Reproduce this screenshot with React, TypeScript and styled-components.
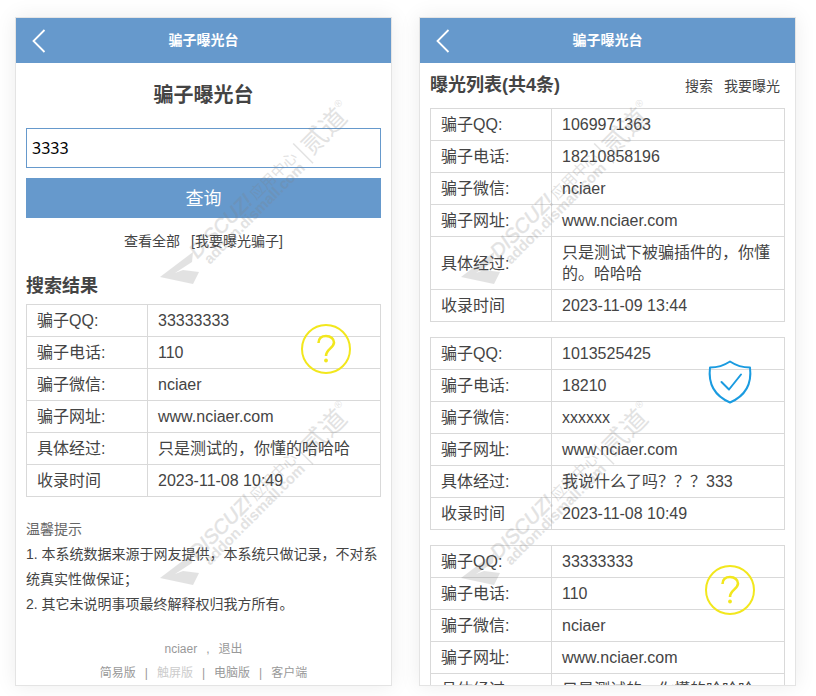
import React from "react";
import styled, { createGlobalStyle, css } from "styled-components";

const GlobalStyle = createGlobalStyle`
  * { box-sizing: border-box; }
  body {
    margin: 0;
    background: #fff;
    color: #444;
    font-family: "Liberation Sans", "Noto Sans CJK SC", sans-serif;
    font-size: 14px;
  }
  a { color: inherit; text-decoration: none; }
`;

const Page = styled.main`
  position: relative;
  display: grid;
  grid-template-columns: 1fr 1fr;
  gap: 27px;
  height: 100vh;
  padding: 17px 20px 10px 15px;
  overflow: hidden;
`;

const Panel = styled.section`
  display: flex;
  flex-direction: column;
  min-width: 0;
  min-height: 0;
  overflow: hidden;
  background: #fff;
  border: 1px solid #e4e4e4;
  box-shadow: 0 0 20px rgba(0, 0, 0, 0.08);
`;

const TopBar = styled.header`
  flex: none;
  display: grid;
  grid-template-columns: 46px 1fr 46px;
  align-items: center;
  height: 45px;
  background: #6699cc;
  color: #fff;
`;

const BackButton = styled.button`
  display: flex;
  justify-content: center;
  padding: 0;
  border: 0;
  background: none;
  color: inherit;
`;

const BarTitle = styled.span`
  text-align: center;
  font-size: 14px;
  font-weight: 700;
  line-height: 24px;
  padding-bottom: 2px;
`;

const Content = styled.div`
  flex: none;
  padding: 0 10px;
`;

const Title = styled.h1`
  margin: 0;
  padding: 16px 0;
  text-align: center;
  font-size: 20px;
  line-height: 33px;
`;

const SearchForm = styled.form`
  display: grid;
  gap: 10px;
`;

const SearchInput = styled.input`
  width: 100%;
  height: 40px;
  padding: 0 5px;
  border: 1px solid #6699cc;
  border-radius: 0;
  outline: 0;
  background: #fff;
  color: #000;
  font: 16px "Noto Sans", sans-serif;
`;

const SubmitButton = styled.button`
  height: 40px;
  padding: 0 0 2px;
  border: 0;
  background: #6699cc;
  color: #fff;
  font-family: inherit;
  font-size: 18px;
`;

const Links = styled.nav<{ $centered?: boolean }>`
  display: flex;
  gap: 11px;
  font-size: 14px;
  line-height: 24px;
  ${(p) => p.$centered && css`
    justify-content: center;
    padding: 11px 0 20px;
  `}
`;

const Heading = styled.h2`
  margin: 0;
  font-size: 18px;
  line-height: 27px;
`;

const ListHeader = styled.div`
  display: flex;
  align-items: center;
  justify-content: space-between;
  padding: 9px 5px 9px 0;
`;

const Results = styled.section`
  display: grid;
  gap: 4px;
`;

const Record = styled.div`
  position: relative;
  & + & { margin-top: 15px; }
`;

const Table = styled.table`
  width: 100%;
  border-collapse: collapse;
  table-layout: fixed;
  font-size: 16px;
  line-height: 21px;
  th, td {
    padding: 5px 10px;
    border: 1px solid #d9d9d9;
    text-align: left;
    vertical-align: middle;
    font-weight: 400;
  }
  th { width: 121px; }
`;

const Mark = styled.svg`
  position: absolute;
  top: 19px;
  right: 29px;
  width: 52px;
  height: 52px;
  fill: none;
`;

const Tips = styled.div`
  padding-top: 20px;
  line-height: 25px;
  p { margin: 0; }
  p:first-child { color: #666; }
`;

const Footer = styled.footer`
  padding-top: 20px;
  color: #999;
  text-align: center;
  font-size: 12px;
  line-height: 24px;
`;

const FooterRow = styled.div`
  display: flex;
  justify-content: center;
  gap: 9px;
`;

const Muted = styled.span`
  color: #ccc;
`;

const Stamps = styled.div`
  position: absolute;
  inset: 97px 0 0 160px;
  display: grid;
  grid-template-columns: 301px 301px;
  grid-auto-rows: 301px;
  overflow: hidden;
  pointer-events: none;
`;

const Stamp = styled.svg`
  width: 200px;
  height: 200px;
  fill: #808080;
  opacity: 0.22;
`;

type Verdict = "unknown" | "safe";

const ROWS = ["骗子QQ:", "骗子电话:", "骗子微信:", "骗子网址:", "具体经过:", "收录时间"];

function VerdictMark({ verdict }: { verdict: Verdict }) {
  if (verdict === "safe") {
    return (
      <Mark viewBox="0 0 52 52" stroke="#1a9be0" strokeWidth="2" strokeLinecap="round" strokeLinejoin="round">
        <path d="M26 5.500C31 8.800 37 11.500 46 11.500C48 28 41 40 26 46.500C11 40 4 28 6 11.500C15 11.500 21 8.800 26 5.500Z" />
        <path d="M17.500 26L25 33.500L37 18.500" />
      </Mark>
    );
  }
  return (
    <Mark viewBox="0 0 52 52" stroke="#f2e71d" strokeWidth="2">
      <circle cx="26" cy="26" r="24" />
      <path d="M18.500 20C18.500 15.500 21.500 13 26 13C31 13 34 16 34 19.500C34 25 26 26 26 33" strokeWidth="2.600" />
      <circle cx="26" cy="37.500" r="1.900" fill="#f2e71d" stroke="none" />
    </Mark>
  );
}

function RecordTable({ values, verdict }: { values: string[]; verdict?: Verdict }) {
  return (
    <Record>
      <Table>
        <tbody>
          {ROWS.map((label, i) => (
            <tr key={label}>
              <th scope="row">{label}</th>
              <td>{values[i]}</td>
            </tr>
          ))}
        </tbody>
      </Table>
      {verdict && <VerdictMark verdict={verdict} />}
    </Record>
  );
}

function Bar() {
  return (
    <TopBar>
      <BackButton type="button" aria-label="返回">
        <svg width="14" height="24" viewBox="0 0 14 24" fill="none" stroke="#fff" strokeWidth="1.800">
          <path d="M12.500 1L1.500 12L12.500 23" />
        </svg>
      </BackButton>
      <BarTitle>骗子曝光台</BarTitle>
    </TopBar>
  );
}

function Watermark() {
  return (
    <Stamp viewBox="0 0 200 200" aria-hidden="true">
      <path d="M0 180L33 155L32 165L15 176L23 173L39 175L33 187Z" />
      <g transform="translate(45 170) rotate(-45)">
        <text x="0" y="-11" fontSize="20" fontStyle="italic" stroke="#808080" strokeWidth="0.500">DISCUZ!</text>
        <text x="83" y="-11" fontSize="15">应用中心</text>
        <text x="5" y="2" fontSize="15" fontWeight="700">addon.dismall.com</text>
        <rect x="149" y="-25" width="1.500" height="28" />
        <text x="154" y="-3" fontSize="26">贰道</text>
        <text x="206" y="-18" fontSize="10">®</text>
      </g>
    </Stamp>
  );
}

export default function App() {
  return (
    <>
      <GlobalStyle />
      <Page>
        <Panel>
          <Bar />
          <Content>
            <Title>骗子曝光台</Title>
            <SearchForm onSubmit={(e) => e.preventDefault()}>
              <SearchInput aria-label="查询内容" defaultValue="3333" />
              <SubmitButton type="submit">查询</SubmitButton>
            </SearchForm>
            <Links $centered>
              <a href="#all">查看全部</a>
              <a href="#report">[我要曝光骗子]</a>
            </Links>
            <Results>
              <Heading>搜索结果</Heading>
              <RecordTable
                verdict="unknown"
                values={["33333333", "110", "nciaer", "www.nciaer.com", "只是测试的，你懂的哈哈哈", "2023-11-08 10:49"]}
              />
            </Results>
            <Tips>
              <p>温馨提示</p>
              <p>1. 本系统数据来源于网友提供，本系统只做记录，不对系统真实性做保证；</p>
              <p>2. 其它未说明事项最终解释权归我方所有。</p>
            </Tips>
            <Footer>
              <FooterRow>
                <a href="#user">nciaer</a>
                <span>,</span>
                <a href="#logout">退出</a>
              </FooterRow>
              <FooterRow>
                <a href="#simple">简易版</a>
                <span>|</span>
                <Muted>触屏版</Muted>
                <span>|</span>
                <a href="#desktop">电脑版</a>
                <span>|</span>
                <a href="#client">客户端</a>
              </FooterRow>
            </Footer>
          </Content>
        </Panel>
        <Panel>
          <Bar />
          <Content>
            <ListHeader>
              <Heading>曝光列表(共4条)</Heading>
              <Links>
                <a href="#search">搜索</a>
                <a href="#report">我要曝光</a>
              </Links>
            </ListHeader>
            <RecordTable
              values={["1069971363", "18210858196", "nciaer", "www.nciaer.com", "只是测试下被骗插件的，你懂的。哈哈哈", "2023-11-09 13:44"]}
            />
            <RecordTable
              verdict="safe"
              values={["1013525425", "18210", "xxxxxx", "www.nciaer.com", "我说什么了吗？？？333", "2023-11-08 10:49"]}
            />
            <RecordTable
              verdict="unknown"
              values={["33333333", "110", "nciaer", "www.nciaer.com", "只是测试的，你懂的哈哈哈", "2023-11-08 10:49"]}
            />
          </Content>
        </Panel>
        <Stamps>
          <Watermark />
          <Watermark />
          <Watermark />
          <Watermark />
        </Stamps>
      </Page>
    </>
  );
}
